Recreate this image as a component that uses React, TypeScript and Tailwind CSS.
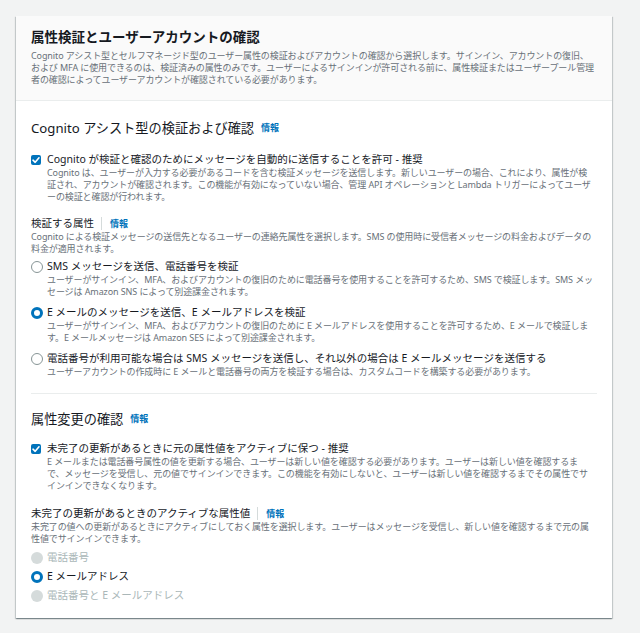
import React from "react";

const Info = ({ divider = false }: { divider?: boolean }) => (
  <span
    className={
      divider
        ? "ml-[7px] inline-flex items-center border-l border-[#d5dbdb] pl-[8px] text-[9px] font-bold leading-[13px] text-[#0073bb]"
        : "ml-[7px] text-[9px] font-bold text-[#0073bb]"
    }
  >
    情報
  </span>
);

const Checkbox = () => (
  <span className="mt-[2.5px] flex h-[10px] w-[10px] shrink-0 items-center justify-center rounded-[2px] bg-[#0073bb]">
    <svg viewBox="0 0 10 10" className="h-[10px] w-[10px]">
      <path d="M2 5.2 L4.2 7.3 L8 2.8" fill="none" stroke="#fff" strokeWidth="1.6" strokeLinecap="round" strokeLinejoin="round" />
    </svg>
  </span>
);

type RadioKind = "on" | "off" | "disabled";
const Radio = ({ kind }: { kind: RadioKind }) => {
  if (kind === "on")
    return <span className="mt-[1.5px] h-[12px] w-[12px] shrink-0 rounded-full border-[3.5px] border-[#0073bb] bg-white" />;
  if (kind === "disabled")
    return <span className="mt-[1.5px] h-[12px] w-[12px] shrink-0 rounded-full bg-[#d5dbdb]" />;
  return <span className="mt-[1.5px] h-[12px] w-[12px] shrink-0 rounded-full border border-[#879596] bg-white" />;
};

const Desc = ({ lines }: { lines: string[] }) => (
  <p className="text-[9px] leading-[12px] tracking-[-0.1px] text-[#687078]">
    {lines.map((l, i) => (
      <span key={i} className="block whitespace-nowrap">
        {l}
      </span>
    ))}
  </p>
);

const CheckItem = ({ label, desc }: { label: string; desc: string[] }) => (
  <div className="flex gap-[6px]">
    <Checkbox />
    <div className="flex-1">
      <div className="text-[10.5px] leading-[15px] text-[#16191f]">{label}</div>
      <Desc lines={desc} />
    </div>
  </div>
);

const RadioItem = ({ kind, label, desc }: { kind: RadioKind; label: string; desc?: string[] }) => (
  <div className="flex gap-[4px]">
    <Radio kind={kind} />
    <div className="flex-1">
      <div className={kind === "disabled" ? "text-[10.5px] leading-[15px] text-[#aab7b8]" : "text-[10.5px] leading-[15px] text-[#16191f]"}>
        {label}
      </div>
      {desc && <Desc lines={desc} />}
    </div>
  </div>
);

export default function App() {
  return (
    <div className="min-h-screen bg-[#f2f3f3] pt-[16px] font-['Noto_Sans','Noto_Sans_CJK_JP',sans-serif]">
      <div className="ml-[16px] w-[596px] bg-white shadow-[0_1px_1px_0_rgba(0,28,36,0.3),1px_1px_1px_0_rgba(0,28,36,0.15),-1px_1px_1px_0_rgba(0,28,36,0.15)]">
        <div className="border-b border-[#eaeded] bg-[#fafafa] px-[15px] pb-[14px] pt-[12px]">
          <h2 className="text-[13.5px] font-bold leading-[18px] text-[#16191f]">属性検証とユーザーアカウントの確認</h2>
          <div className="mt-[4px]">
            <Desc
              lines={[
                "Cognito アシスト型とセルフマネージド型のユーザー属性の検証およびアカウントの確認から選択します。サインイン、アカウントの復旧、",
                "および MFA に使用できるのは、検証済みの属性のみです。ユーザーによるサインインが許可される前に、属性検証またはユーザープール管理",
                "者の確認によってユーザーアカウントが確認されている必要があります。",
              ]}
            />
          </div>
        </div>

        <div className="px-[15px] pb-[15px] pt-[18px]">
          <h3 className="flex items-center text-[13.2px] font-normal leading-[18px] text-[#16191f]">
            Cognito アシスト型の検証および確認
            <Info />
          </h3>

          <div className="mt-[15px]">
            <CheckItem
              label="Cognito が検証と確認のためにメッセージを自動的に送信することを許可 - 推奨"
              desc={[
                "Cognito は、ユーザーが入力する必要があるコードを含む検証メッセージを送信します。新しいユーザーの場合、これにより、属性が検",
                "証され、アカウントが確認されます。この機能が有効になっていない場合、管理 API オペレーションと Lambda トリガーによってユーザ",
                "ーの検証と確認が行われます。",
              ]}
            />
          </div>

          <div className="mt-[13px]">
            <div className="flex items-center text-[10.5px] leading-[15px] text-[#16191f]">
              検証する属性
              <Info divider />
            </div>
            <Desc
              lines={[
                "Cognito による検証メッセージの送信先となるユーザーの連絡先属性を選択します。SMS の使用時に受信者メッセージの料金およびデータの",
                "料金が適用されます。",
              ]}
            />
            <div className="mt-[4px] flex flex-col gap-[7px]">
              <RadioItem
                kind="off"
                label="SMS メッセージを送信、電話番号を検証"
                desc={[
                  "ユーザーがサインイン、MFA、およびアカウントの復旧のために電話番号を使用することを許可するため、SMS で検証します。SMS メッ",
                  "セージは Amazon SNS によって別途課金されます。",
                ]}
              />
              <RadioItem
                kind="on"
                label="E メールのメッセージを送信、E メールアドレスを検証"
                desc={[
                  "ユーザーがサインイン、MFA、およびアカウントの復旧のために E メールアドレスを使用することを許可するため、E メールで検証しま",
                  "す。E メールメッセージは Amazon SES によって別途課金されます。",
                ]}
              />
              <RadioItem
                kind="off"
                label="電話番号が利用可能な場合は SMS メッセージを送信し、それ以外の場合は E メールメッセージを送信する"
                desc={["ユーザーアカウントの作成時に E メールと電話番号の両方を検証する場合は、カスタムコードを構築する必要があります。"]}
              />
            </div>
          </div>

          <div className="mt-[15px] border-t border-[#eaeded]" />

          <h3 className="mt-[16px] flex items-center text-[13.2px] font-normal leading-[18px] text-[#16191f]">
            属性変更の確認
            <Info />
          </h3>

          <div className="mt-[13px]">
            <CheckItem
              label="未完了の更新があるときに元の属性値をアクティブに保つ - 推奨"
              desc={[
                "E メールまたは電話番号属性の値を更新する場合、ユーザーは新しい値を確認する必要があります。ユーザーは新しい値を確認するま",
                "で、メッセージを受信し、元の値でサインインできます。この機能を有効にしないと、ユーザーは新しい値を確認するまでその属性でサ",
                "インインできなくなります。",
              ]}
            />
          </div>

          <div className="mt-[14px]">
            <div className="flex items-center text-[10.5px] leading-[15px] text-[#16191f]">
              未完了の更新があるときのアクティブな属性値
              <Info divider />
            </div>
            <Desc
              lines={[
                "未完了の値への更新があるときにアクティブにしておく属性を選択します。ユーザーはメッセージを受信し、新しい値を確認するまで元の属",
                "性値でサインインできます。",
              ]}
            />
            <div className="mt-[5px] flex flex-col gap-[4px]">
              <RadioItem kind="disabled" label="電話番号" />
              <RadioItem kind="on" label="E メールアドレス" />
              <RadioItem kind="disabled" label="電話番号と E メールアドレス" />
            </div>
          </div>
        </div>
      </div>
    </div>
  );
}
